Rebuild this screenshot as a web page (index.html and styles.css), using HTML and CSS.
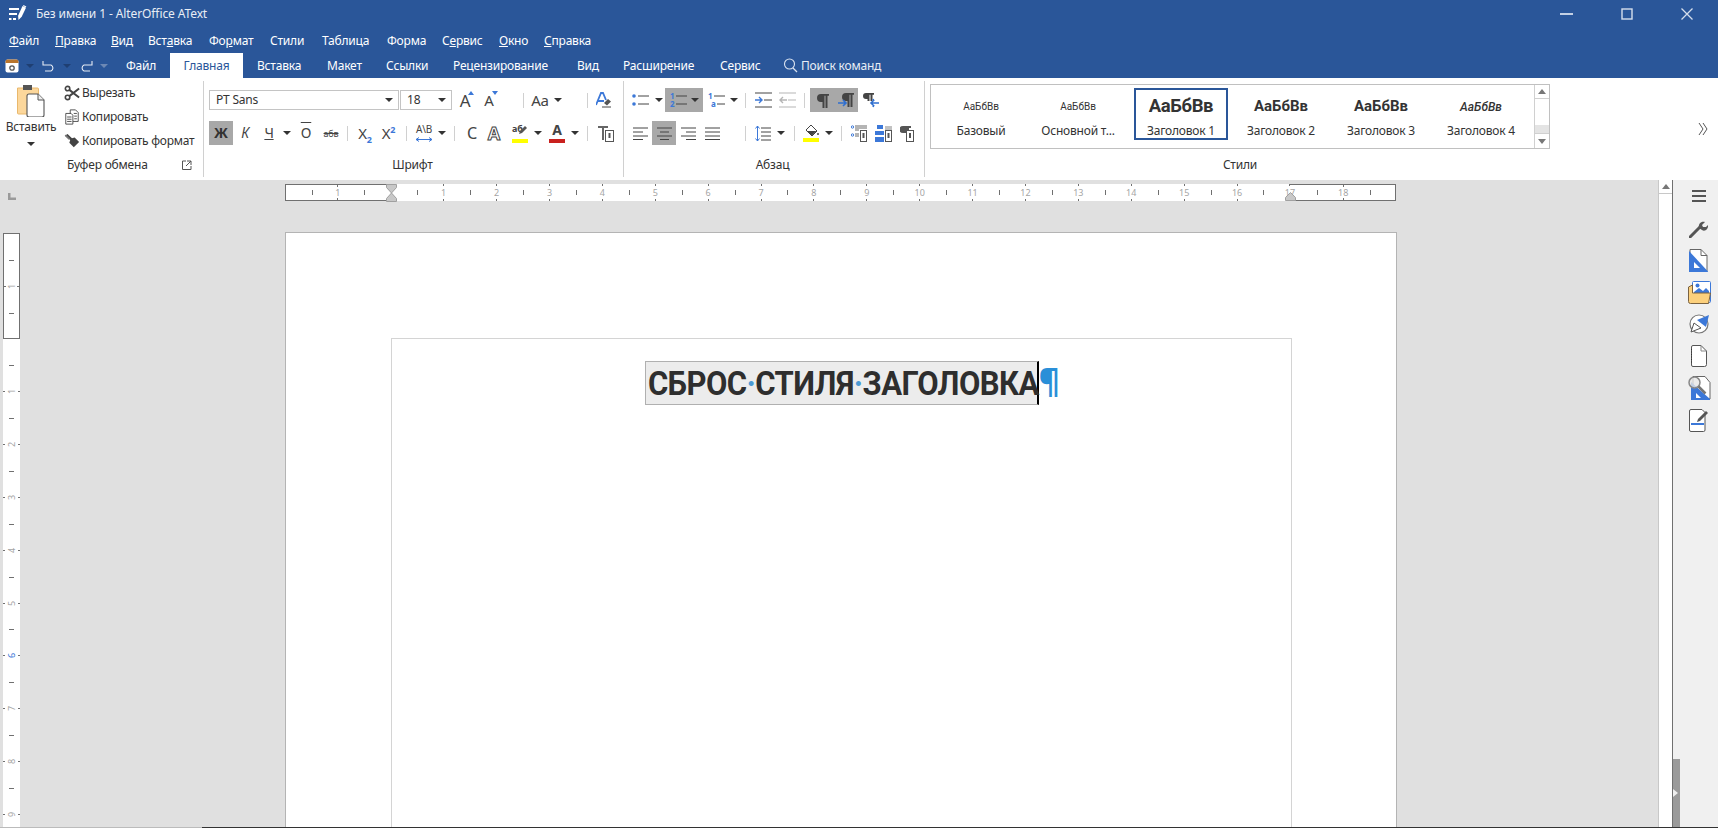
FILE: index.html
```html
<!DOCTYPE html>
<html lang="ru">
<head>
<meta charset="utf-8">
<title>Без имени 1 - AlterOffice AText</title>
<link rel="stylesheet" href="styles.css">
</head>
<body>
<div class="app">
  <header class="titlebar">
    <svg class="logo" width="18" height="18" viewBox="0 0 18 18"><path fill="#fff" d="M0 3h10v2H0zM0 8h8v2H0zM0 13h2.500v2H0zM4 13h3v2H4z"/><path fill="#fff" d="M13.500 1l3.500 1.800-4.300 9L9.500 15l-.4-4.300z"/><path fill="#fff" d="M14.500 0l2.800 1.400-.5 1-2.800-1.400z"/></svg>
    <span class="title">Без имени 1 - AlterOffice AText</span>
    <div class="winctl">
      <span class="wbtn"><svg width="14" height="12" viewBox="0 0 14 12"><path d="M0 6h13" stroke="#c3d0e4" stroke-width="2"/></svg></span>
      <span class="wbtn"><svg width="12" height="12" viewBox="0 0 12 12"><rect x="1" y="1" width="10" height="10" fill="none" stroke="#d5deec" stroke-width="1.400"/></svg></span>
      <span class="wbtn"><svg width="12" height="12" viewBox="0 0 12 12"><path d="M.5.5l11 11M11.500.5l-11 11" stroke="#d5deec" stroke-width="1.300"/></svg></span>
    </div>
  </header>

  <nav class="menubar">
    <a><u>Ф</u>айл</a><a><u>П</u>равка</a><a><u>В</u>ид</a><a>Вст<u>а</u>вка</a><a>Фо<u>р</u>мат</a><a>Стили</a><a>Таблица</a><a>Форма</a><a>С<u>е</u>рвис</a><a><u>О</u>кно</a><a><u>С</u>правка</a>
  </nav>

  <div class="tabbar">
    <div class="qat">
      <svg class="qi" width="14" height="14" viewBox="0 0 14 14"><rect x=".5" y=".5" width="13" height="13" rx="2" fill="#fff"/><path d="M.5 2.500a2 2 0 0 1 2-2h9a2 2 0 0 1 2 2V4H.5z" fill="#b9752c"/><circle cx="7" cy="9" r="2.200" fill="none" stroke="#555" stroke-width="1.300"/></svg>
      <span class="qcaret"></span>
      <svg class="qu" width="14" height="12" viewBox="0 0 14 12"><path d="M1 1v4h4M1 5h8a3.300 3.300 0 0 1 0 6H3" fill="none" stroke="#e6ecf5" stroke-width="1.100"/></svg>
      <span class="qcaret"></span>
      <svg class="qu" width="14" height="12" viewBox="0 0 14 12"><path d="M13 1v4H9M13 5H5a3.300 3.300 0 0 0 0 6h6" fill="none" stroke="#e6ecf5" stroke-width="1.100"/></svg>
      <span class="qcaret dim"></span>
    </div>
    <a class="tab t1">Файл</a>
    <a class="tab active">Главная</a>
    <a class="tab t3">Вставка</a>
    <a class="tab t4">Макет</a>
    <a class="tab t5">Ссылки</a>
    <a class="tab t6">Рецензирование</a>
    <a class="tab t7">Вид</a>
    <a class="tab t8">Расширение</a>
    <a class="tab t9">Сервис</a>
    <span class="search">
      <svg width="15" height="15" viewBox="0 0 15 15"><circle cx="6.500" cy="6" r="5" fill="none" stroke="#dbe3f0" stroke-width="1.100"/><path d="M10 10l4 4" stroke="#dbe3f0" stroke-width="1.200"/></svg>
      Поиск команд
    </span>
  </div>

  <section class="ribbon">
    <div class="group g-clip">
      <div class="clip-top">
        <div class="paste">
          <svg width="30" height="32" viewBox="0 0 30 32"><path d="M1.500 3h20a1 1 0 0 1 1 1v25H2.500a1 1 0 0 1-1-1z" fill="#fcd79b" stroke="#e9b86c"/><rect x="7" y="0" width="9" height="5" fill="#555"/><path d="M13 9h9l6 6v15a2 2 0 0 1-2 2H13a2 2 0 0 1-2-2V11a2 2 0 0 1 2-2z" fill="#fff" stroke="#555" stroke-width="1.100"/><path d="M22 9v6h6" fill="#eee" stroke="#555" stroke-width="1"/></svg>
          <span class="paste-label">Вставить</span>
          <span class="caret"></span>
        </div>
        <div class="clip-list">
          <div class="clip-item"><svg width="18" height="18" viewBox="0 0 18 18"><circle cx="4" cy="4" r="2.500" fill="none" stroke="#444" stroke-width="1.800"/><circle cx="4" cy="14" r="2.500" fill="none" stroke="#444" stroke-width="1.800"/><path d="M6 5.500L17 14M6 12.500L17 4" stroke="#444" stroke-width="2.200"/></svg>Вырезать</div>
          <div class="clip-item"><svg width="18" height="18" viewBox="0 0 18 18"><path d="M7 1h6l3 3v10H7z" fill="#fff" stroke="#444"/><path d="M2 5h6l2 2v10H2z" fill="#fff" stroke="#444"/><path d="M3.500 9h5M3.500 11.500h5M3.500 14h5M11 5h3.500M11.500 8h3M11.500 11h3" stroke="#444"/></svg>Копировать</div>
          <div class="clip-item"><svg width="18" height="18" viewBox="0 0 18 18"><path d="M1 3l3-2 5 5 3-1 5 5-6 6-5-5 1-3z" fill="#444"/><path d="M1.500 2.500L6 7" stroke="#777" stroke-width="2"/></svg>Копировать формат</div>
        </div>
      </div>
      <div class="glabel clip-label"><span>Буфер обмена</span>
        <svg class="launch" width="10" height="10" viewBox="0 0 10 10"><path d="M4 1H.5v8.500H9V6" fill="none" stroke="#555"/><path d="M5 1h4v4M9 1L4 6" fill="none" stroke="#555"/></svg>
      </div>
    </div>

    <div class="group g-font">
      <div class="row">
        <div class="combo c-font"><span>PT Sans</span><span class="caret"></span></div>
        <div class="combo c-size ml1"><span>18</span><span class="caret"></span></div>
        <span class="tb w24 ml1 big">A<svg class="sup" width="6" height="4" viewBox="0 0 6 4"><path d="M3 0l3 4H0z" fill="#3c78d8"/></svg></span>
        <span class="tb w24 med">A<svg class="sup" width="6" height="4" viewBox="0 0 6 4"><path d="M3 4L0 0h6z" fill="#3c78d8"/></svg></span>
        <i class="sep ml22"></i>
        <span class="tb w26 ml3 med2">Aa</span><span class="tb w10"><span class="caret"></span></span>
        <i class="sep ml24"></i>
        <span class="tb w24 ml4"><svg width="16" height="16" viewBox="0 0 16 16"><path d="M0 13L5 1h2l3 7M2 9h6" fill="none" stroke="#3c78d8" stroke-width="1.800"/><path d="M8 11l4-4 3 2.500-4 4z" fill="#555"/><path d="M6 15h9" stroke="#444"/></svg></span>
      </div>
      <div class="row">
        <span class="tb w24 on bold-b">Ж</span>
        <span class="tb w24 it">К</span>
        <span class="tb w24 und">Ч</span>
        <span class="tb w12"><span class="caret"></span></span>
        <span class="tb w26 over">О</span>
        <span class="tb w24 strike">абв</span>
        <i class="sep ml4"></i>
        <span class="tb w24 ml5 sx"><span>X<sub>2</sub></span></span>
        <span class="tb w23 sx"><span>X<sup>2</sup></span></span>
        <i class="sep ml6"></i>
        <span class="tb w24 ml5"><span class="ab">A\B</span><svg class="ab-arrow" width="18" height="5" viewBox="0 0 18 5"><path d="M1 2.500h16M4 .5L1 2.500l3 2M14 .5l3 2-3 2" fill="none" stroke="#3c78d8"/></svg></span>
        <span class="tb w12"><span class="caret"></span></span>
        <i class="sep ml6"></i>
        <span class="tb w24 ml5 caps">С</span>
        <span class="tb w20 outline">A</span>
        <span class="tb w24 ml4"><span class="hl">аб</span><svg class="pen" width="9" height="9" viewBox="0 0 9 9"><path d="M0 9l1-3 5-5 2 2-5 5z" fill="#555"/></svg><i class="bar yellow"></i></span>
        <span class="tb w12"><span class="caret"></span></span>
        <span class="tb w24 ml1 colA">A<i class="bar red"></i></span>
        <span class="tb w12"><span class="caret"></span></span>
        <i class="sep ml6"></i>
        <span class="tb w24 ml6"><svg width="16" height="17" viewBox="0 0 16 17"><path d="M0 1h10v2H6v12H4V3H0z" fill="#666"/><rect x="7.500" y="5.500" width="8" height="11" fill="#fff" stroke="#555"/><rect x="10.500" y="8" width="2" height="5" fill="#555"/></svg></span>
      </div>
      <div class="glabel">Шрифт</div>
    </div>

    <div class="group g-para">
      <div class="row">
        <span class="tb w24"><svg width="17" height="14" viewBox="0 0 17 14"><circle cx="2" cy="3" r="1.800" fill="#3c78d8"/><circle cx="2" cy="11" r="1.800" fill="#3c78d8"/><path d="M6 3h11M6 11h11" stroke="#444"/></svg></span>
        <span class="tb w13"><span class="caret"></span></span>
        <span class="tb w38 on numb"><svg width="17" height="16" viewBox="0 0 17 16"><text x="0" y="7" class="mini">1</text><text x="0" y="15" class="mini">2</text><path d="M6 4h11M6 12h11" stroke="#444"/></svg><span class="caret"></span></span>
        <span class="tb w26"><svg width="17" height="16" viewBox="0 0 17 16"><text x="0" y="7" class="mini">1</text><text x="3" y="15" class="mini">a</text><path d="M6 4h11M9 12h8" stroke="#444"/></svg></span>
        <span class="tb w10"><span class="caret"></span></span>
        <i class="sep ml6"></i>
        <span class="tb w24 ml5"><svg width="17" height="16" viewBox="0 0 17 16"><path d="M0 1h17M9 8h8M0 15h17" stroke="#444"/><path d="M0 8h7M4 5l3 3-3 3" fill="none" stroke="#3c78d8" stroke-width="1.400"/></svg></span>
        <span class="tb w24"><svg width="17" height="16" viewBox="0 0 17 16"><path d="M0 1h17M9 8h8M0 15h17" stroke="#b5b5b5"/><path d="M8 8H1M4 5L1 8l3 3" fill="none" stroke="#b5b5b5" stroke-width="1.400"/></svg></span>
        <i class="sep ml5"></i>
        <div class="pil-on ml5">
          <span class="tb w24"><svg width="13" height="15" viewBox="0 0 13 15"><path d="M5 1h8v1.800h-1.500V15H9.500V2.800h-1V15h-2V9H5a4 4 0 0 1 0-8z" fill="#444"/></svg></span>
          <span class="tb w24"><svg width="16" height="16" viewBox="0 0 16 16"><path d="M8 1h8v1.800h-1.500V15h-2V2.800h-1V15h-2V9H8a4 4 0 0 1 0-8z" fill="#444"/><path d="M0 11h8M5 8l3 3-3 3" fill="none" stroke="#2f6fd0" stroke-width="1.600"/></svg></span>
        </div>
        <span class="tb w24"><svg width="17" height="16" viewBox="0 0 17 16"><path d="M4 1h8v1.800h-1.500V9h-2V2.800h-1V9h-2V7H4a3 3 0 0 1 0-6z" fill="#444"/><path d="M17 11H9M12 8l-3 3 3 3M11 7l1 2M11 15l1-2" fill="none" stroke="#2f6fd0" stroke-width="1.600"/></svg></span>
      </div>
      <div class="row">
        <span class="tb w24"><svg width="15" height="13" viewBox="0 0 15 13"><path d="M0 1h15M0 5h10M0 9h15M0 12.500h10" stroke="#444"/></svg></span>
        <span class="tb w24 on"><svg width="15" height="13" viewBox="0 0 15 13"><path d="M0 1h15M3 5h9M0 9h15M3 12.500h9" stroke="#444"/></svg></span>
        <span class="tb w24"><svg width="15" height="13" viewBox="0 0 15 13"><path d="M0 1h15M5 5h10M0 9h15M5 12.500h10" stroke="#444"/></svg></span>
        <span class="tb w24"><svg width="15" height="13" viewBox="0 0 15 13"><path d="M0 1h15M0 5h15M0 9h15M0 12.500h15" stroke="#444"/></svg></span>
        <i class="sep ml21"></i>
        <span class="tb w24 ml5"><svg width="16" height="17" viewBox="0 0 16 17"><path d="M6 3h10M6 7h10M6 11h10M6 15h10" stroke="#444"/><path d="M2.500 1v15M.5 3.500l2-2.500 2 2.500M.5 13.500l2 2.500 2-2.500" fill="none" stroke="#3c78d8"/></svg></span>
        <span class="tb w12"><span class="caret"></span></span>
        <i class="sep ml7"></i>
        <span class="tb w24 ml4"><svg width="16" height="18" viewBox="0 0 16 18"><path d="M8 1l6 6-5 5-6-6z" fill="#fff" stroke="#444"/><path d="M3.500 7h10L9 11.500z" fill="#444"/><circle cx="15" cy="10" r="1" fill="#444"/><rect y="14" width="16" height="4" fill="#ffff00"/></svg></span>
        <span class="tb w12"><span class="caret"></span></span>
        <i class="sep ml6"></i>
        <span class="tb w24 ml5"><svg width="16" height="17" viewBox="0 0 16 17"><circle cx="1.500" cy="2" r="1.200" fill="none" stroke="#3c78d8"/><circle cx="1.500" cy="10" r="1.200" fill="none" stroke="#3c78d8"/><path d="M4 1h12M4 3h12M4 5h4M4 9h4M4 11h4" stroke="#444" stroke-width=".8"/><rect x="9.500" y="5.500" width="6" height="11" fill="#fff" stroke="#555"/><rect x="11.500" y="8" width="2" height="5" fill="#555"/></svg></span>
        <span class="tb w24"><svg width="17" height="17" viewBox="0 0 17 17"><rect x="2" y="0" width="6" height="4" fill="#3c78d8"/><rect x="0" y="6" width="9" height="4" fill="#3c78d8"/><rect x="0" y="12" width="9" height="5" fill="#3c78d8"/><rect x="10.500" y="5.500" width="6" height="11" fill="#fff" stroke="#555"/><rect x="12.500" y="8" width="2" height="5" fill="#555"/><path d="M10 2h7M10 4h7" stroke="#666" stroke-width=".8"/></svg></span>
        <span class="tb w24"><svg width="14" height="17" viewBox="0 0 14 17"><path d="M3 1h8v2H9v3H7v2H3a3.500 3.500 0 0 1 0-7z" fill="#555"/><rect x="6.500" y="5.500" width="7" height="11" fill="#fff" stroke="#555"/><rect x="9" y="8" width="2" height="5" fill="#555"/></svg></span>
      </div>
      <div class="glabel">Абзац</div>
    </div>

    <div class="group g-styles">
      <div class="gallery">
        <div class="gitem"><span class="pv pv-base">АаБбВв</span><span class="gname">Базовый</span></div>
        <div class="gitem shift"><span class="pv pv-base">АаБбВв</span><span class="gname">Основной т...</span></div>
        <div class="gitem sel"><span class="pv pv-h1">АаБбВв</span><span class="gname">Заголовок 1</span></div>
        <div class="gitem"><span class="pv pv-h2">АаБбВв</span><span class="gname">Заголовок 2</span></div>
        <div class="gitem"><span class="pv pv-h2">АаБбВв</span><span class="gname">Заголовок 3</span></div>
        <div class="gitem"><span class="pv pv-h4">АаБбВв</span><span class="gname">Заголовок 4</span></div>
        <div class="gscroll">
          <span class="gs-btn"><i class="tri up"></i></span>
          <span class="gs-track"></span>
          <span class="gs-thumb"></span>
          <span class="gs-btn end"><i class="tri down"></i></span>
        </div>
      </div>
      <div class="glabel">Стили</div>
      <svg class="more" width="10" height="12" viewBox="0 0 10 12"><path d="M1 0l4 6-4 6M5 0l4 6-4 6" fill="none" stroke="#555"/></svg>
    </div>
  </section>

  <main class="work">
    <div class="canvas">
      <div class="hrow">
        <div class="corner"><svg width="8" height="7" viewBox="0 0 8 7"><path d="M0 0h2.500v4.500H8V7H0z" fill="#9a9a9a"/></svg></div>
        <div class="hruler">
          <div class="hm hm-l"><span class="cm">1</span><span class="cm"></span></div>
          <div class="hi">
            <span class="cm">1</span><span class="cm">2</span><span class="cm">3</span><span class="cm">4</span><span class="cm">5</span><span class="cm">6</span><span class="cm">7</span><span class="cm">8</span><span class="cm">9</span><span class="cm">10</span><span class="cm">11</span><span class="cm">12</span><span class="cm">13</span><span class="cm">14</span><span class="cm">15</span><span class="cm">16</span><span class="cm">17</span>
          </div>
          <div class="hm hm-r"><span class="cm">18</span><span class="cm"></span></div>
          <svg class="marker m-left" width="11" height="18" viewBox="0 0 11 18"><path d="M.5.500h10v3L5.500 9l5 5.500v3H.5v-3L5.500 9 .5 3.500z" fill="#c8c8c8" stroke="#a0a0a0"/></svg>
          <svg class="marker m-right" width="11" height="9" viewBox="0 0 11 9"><path d="M5.500.5l5 5v3H.5v-3z" fill="#c8c8c8" stroke="#a0a0a0"/></svg>
        </div>
      </div>
      <div class="lower">
        <div class="vruler">
          <div class="vm"><span class="vc"></span><span class="vc"><b>1</b></span><span class="vc"></span></div>
          <div class="vi">
            <span class="vc"><b>1</b></span><span class="vc"><b>2</b></span><span class="vc"><b>3</b></span><span class="vc"><b>4</b></span><span class="vc"><b>5</b></span><span class="vc blue"><b>6</b></span><span class="vc"><b>7</b></span><span class="vc"><b>8</b></span><span class="vc"><b>9</b></span>
          </div>
        </div>
        <div class="page">
          <div class="frame">
            <div class="para">
              <div class="sel-text"><span class="txt">СБРОС<span class="dot">·</span>СТИЛЯ<span class="dot">·</span>ЗАГОЛОВКА</span><span class="pilcrow">¶</span></div>
            </div>
          </div>
        </div>
      </div>
    </div>
    <div class="vscroll">
      <span class="vs-btn"><i class="tri up"></i></span>
    </div>
    <aside class="sidebar">
      <span class="si"><svg width="14" height="12" viewBox="0 0 14 12"><path d="M0 1h14M0 6h14M0 11h14" stroke="#555" stroke-width="2"/></svg></span>
      <span class="si"><svg width="20" height="20" viewBox="0 0 20 20"><path d="M1 19l10-10" stroke="#555" stroke-width="3" stroke-linecap="round"/><path d="M10 10c-1-4 2-7 6-6l-3 3 1 2 3 0 2-2c.5 4-3 7-6 5z" fill="#555"/></svg></span>
      <span class="si"><svg width="20" height="23" viewBox="0 0 20 23"><path d="M1 .5h11l6 6V22H1z" fill="#fff" stroke="#666"/><path d="M12 .5v6h6" fill="none" stroke="#666"/><path d="M0 2l19 20.500V23H0z" fill="#3c78d8"/><path d="M5 13l6 6H5z" fill="#fff"/></svg></span>
      <span class="si"><svg width="23" height="23" viewBox="0 0 23 23"><rect x="4.500" y=".5" width="18" height="21" rx="1" fill="#fff" stroke="#3c78d8"/><path d="M6 11l5-4 4 3 3-3 3 3v2H6z" fill="#3c78d8"/><circle cx="9.500" cy="4.500" r="2" fill="#3c78d8"/><path d="M.5 6l4-2v8h18l-2 10.500H2.500a2 2 0 0 1-2-2z" fill="#fcd07c" stroke="#7a6240"/></svg></span>
      <span class="si"><svg width="20" height="20" viewBox="0 0 20 20"><circle cx="10" cy="10" r="9" fill="#fff" stroke="#777" stroke-width="1.200"/><path d="M2 18l3-9 7 5z" fill="#fff" stroke="#555"/><path d="M8 6l12-5-3 12z" fill="#3c78d8"/></svg></span>
      <span class="si"><svg width="16" height="22" viewBox="0 0 16 22"><path d="M2 .5h8l5.500 5.500v13.500a2 2 0 0 1-2 2H2a1.500 1.500 0 0 1-1.500-1.500V2A1.500 1.500 0 0 1 2 .5z" fill="#fff" stroke="#555"/><path d="M10 .5V6h5.500" fill="none" stroke="#888"/><path d="M.5 4v14" stroke="#333" stroke-dasharray="1 1.500"/></svg></span>
      <span class="si"><svg width="23" height="24" viewBox="0 0 23 24"><path d="M5 .5h12l5 6V23H5z" fill="#fff" stroke="#666"/><path d="M3 6l19 17v1H3z" fill="#3c78d8"/><path d="M8 17l5 5H8z" fill="#fff"/><circle cx="6.500" cy="6.500" r="5.500" fill="#e6e6e6" fill-opacity=".8" stroke="#888" stroke-width="1.500"/><path d="M10.500 10.500l7 7" stroke="#777" stroke-width="2.500"/></svg></span>
      <span class="si"><svg width="20" height="23" viewBox="0 0 20 23"><path d="M2 .5h11l3 3v17.500a1.500 1.500 0 0 1-1.500 1.500H2A1.500 1.500 0 0 1 .5 21V2A1.500 1.500 0 0 1 2 .5z" fill="#fff" stroke="#555"/><path d="M2 15h13" stroke="#3c78d8" stroke-width="2"/><path d="M8 13l1-3 8-8 2 2-8 8z" fill="#555"/></svg></span>
      <span class="handle"><i class="tri right"></i></span>
    </aside>
  </main>
  <div class="baseline"><span class="bl-left"></span><span class="bl-right"></span></div>
</div>
</body>
</html>
```

FILE: styles.css
```css
* { box-sizing: border-box; }
html, body { margin: 0; padding: 0; background: #e0e0e0; }
body { font: 12px/1 "Noto Sans", sans-serif; color: #333; letter-spacing: -0.2px; }
.app { width: 1718px; height: 828px; display: flex; flex-direction: column; overflow: hidden; }

/* title bar */
.titlebar { height: 28px; background: #2a5699; display: flex; align-items: center; color: #fff; }
.logo { margin-left: 9px; flex: none; }
.title { margin-left: 9px; color: #e8edf5; letter-spacing: -0.1px; }
.winctl { margin-left: auto; margin-right: 1px; display: flex; }
.wbtn { width: 60px; height: 28px; display: flex; align-items: center; justify-content: center; }

/* menu */
.menubar { height: 25px; background: #2a5699; display: grid; grid-template-columns: 46px 56px 37px 61px 61px 52px 65px 55px 57px 45px auto; align-items: center; justify-content: start; padding-left: 9px; }
.menubar a { color: #fff; }

/* tabs */
.tabbar { height: 25px; background: #2a5699; display: flex; align-items: stretch; color: #fff; }
.qat { width: 117px; display: flex; align-items: center; padding-left: 5px; }
.qcaret { width: 0; height: 0; border: 4px solid transparent; border-top: 4px solid #1f3f72; border-bottom: 0; margin: 0 8px 0 7px; }
.qcaret.dim { border-top-color: #6d89b5; }
.qu { flex: none; }
.tab { display: flex; align-items: center; padding-left: 14px; color: #fff; flex: none; }
.tab.active { background: #fff; color: #2a5699; width: 73px; justify-content: center; padding: 0; }
.tab.t1 { width: 53px; padding-left: 9px; }
.t3 { width: 70px; } .t4 { width: 59px; } .t5 { width: 67px; } .t6 { width: 124px; } .t7 { width: 46px; } .t8 { width: 97px; } .t9 { width: 63px; }
.search { display: flex; align-items: center; gap: 3px; margin-left: 14px; color: #e8edf5; }

/* ribbon */
.ribbon { height: 102px; background: #fff; display: flex; padding-top: 3px; }
.group { height: 96px; display: flex; flex-direction: column; padding-top: 7px; flex: none; border-right: 1px solid #d0d0d0; position: relative; }
.g-clip { width: 204px; padding-top: 0; }
.g-font { width: 420px; padding-left: 5px; }
.g-para { width: 301px; padding-left: 4px; }
.g-styles { flex: 1; border-right: 0; padding: 3px 0 0 5px; }
.row { display: flex; align-items: center; height: 24px; margin-bottom: 9px; }
.glabel { margin-top: auto; height: 23px; padding-bottom: 2px; display: flex; align-items: center; justify-content: center; }
.g-font .glabel, .g-para .glabel { margin-right: 7px; }

.clip-top { display: flex; height: 73px; }
.paste { width: 62px; display: flex; flex-direction: column; align-items: center; padding-top: 4px; }
.paste-label { margin-top: 4px; margin-bottom: 9px; }
.clip-list { display: flex; flex-direction: column; }
.clip-item { height: 24px; display: flex; align-items: center; gap: 2px; margin-left: 2px; white-space: nowrap; letter-spacing: -0.26px; }
.clip-item svg { width: 16px; height: 16px; flex: none; }
.clip-label { justify-content: flex-start; padding-left: 67px; }
.launch { margin-left: 34px; }

.caret { display: inline-block; width: 0; height: 0; border: 4px solid transparent; border-top: 4px solid #333; border-bottom: 0; flex: none; }

.combo { height: 20px; border: 1px solid #c4c4c4; display: flex; align-items: center; justify-content: space-between; padding: 0 5px 0 6px; flex: none; font-size: 12px; }
.c-font { width: 190px; }
.c-size { width: 52px; }

.tb { height: 24px; display: flex; align-items: center; justify-content: center; flex: none; position: relative; font-size: 14px; color: #444; }
.tb.on { background: #a8a8a8; }
.w10 { width: 10px; } .w12 { width: 12px; } .w13 { width: 13px; } .w20 { width: 20px; } .w23 { width: 23px; }
.w24 { width: 24px; } .w26 { width: 26px; } .w38 { width: 38px; }
.numb { gap: 4px; }
.ml1 { margin-left: 1px; } .ml3 { margin-left: 3px; } .ml4 { margin-left: 4px; } .ml5 { margin-left: 5px; }
.ml6 { margin-left: 6px; } .ml7 { margin-left: 7px; } .ml21 { margin-left: 21px; } .ml22 { margin-left: 22px; } .ml24 { margin-left: 24px; }
.sep { width: 1px; height: 15px; background: #d0d0d0; flex: none; }
.pil-on { display: flex; background: #a8a8a8; }

.big { font-size: 17px; }
.med { font-size: 15px; }
.med2 { font-size: 15px; }
.sup { position: absolute; top: 3px; right: 3px; }
.bold-b { font-weight: 700; font-size: 14px; color: #333; }
.it { font-style: italic; }
.und { text-decoration: underline; }
.over { text-decoration: overline; font-size: 14px; }
.strike { text-decoration: line-through; font-size: 9px; }
.sx { font-size: 15px; }
.sx sub, .sx sup { font-size: 9px; color: #3c78d8; font-weight: 700; line-height: 0; }
.ab { font-size: 10px; position: absolute; top: 3px; }
.ab-arrow { position: absolute; bottom: 3px; }
.caps { font-size: 16px; }
.outline { font-size: 18px; color: #fff; -webkit-text-stroke: 1px #444; font-weight: 700; }
.hl { font-size: 9px; position: absolute; top: 3px; left: 4px; font-weight: 700; }
.pen { position: absolute; top: 4px; right: 4px; }
.bar { position: absolute; bottom: 2px; left: 4px; width: 16px; height: 4px; }
.yellow { background: #ffff00; }
.red { background: #c9211e; }
.colA { align-items: flex-start; padding-top: 2px; font-weight: 700; }
.mini { font: 700 8px "Noto Sans", sans-serif; fill: #3c78d8; }

/* style gallery */
.gallery { width: 620px; height: 65px; border: 1px solid #c0c0c0; display: flex; padding-top: 3px; flex: none; }
.gitem { width: 94px; height: 52px; margin: 0 3px; border: 2px solid transparent; display: flex; flex-direction: column; align-items: center; flex: none; white-space: nowrap; }
.gitem.sel { border-color: #2a5699; }
.gitem.shift { padding-right: 6px; }
.pv { height: 32px; display: flex; align-items: center; padding-top: 1px; font-family: Roboto, sans-serif; letter-spacing: 0; }
.gname { margin-top: 3px; font-size: 12px; }
.pv-base { font-size: 10px; }
.pv-h1 { font-size: 18.500px; font-weight: 700; letter-spacing: -0.4px; }
.pv-h2 { font-size: 15px; font-weight: 700; }
.pv-h4 { font-size: 12px; font-weight: 500; font-style: italic; }
.gscroll { margin-left: auto; margin-top: -3px; width: 15px; height: 63px; border-left: 1px solid #d0d0d0; display: flex; flex-direction: column; }
.gs-btn { height: 14px; display: flex; align-items: center; justify-content: center; border-bottom: 1px solid #d0d0d0; flex: none; }
.gs-btn.end { border-bottom: 0; border-top: 1px solid #d0d0d0; height: 15px; }
.gs-track { flex: 1; }
.gs-thumb { height: 8px; background: #e4e4e4; flex: none; }
.tri { display: block; width: 0; height: 0; border: 4px solid transparent; }
.tri.up { border-bottom: 5px solid #777; border-top: 0; }
.tri.down { border-top: 5px solid #777; border-bottom: 0; }
.tri.right { border-left: 5px solid #eee; border-right: 0; }
.g-styles .glabel { width: 620px; }
.more { position: absolute; right: 10px; top: 42px; }

/* workspace */
.work { height: 647px; display: flex; background: #e0e0e0; flex: none; }
.canvas { width: 1658px; flex: none; overflow: hidden; }
.hrow { display: flex; height: 21px; padding-top: 4px; }
.corner { width: 285px; padding: 6px 0 0 8px; flex: none; }
.hruler { display: flex; height: 17px; position: relative; width: 1111px; flex: none; }
.cm { width: 52.900px; height: 100%; flex: none; display: flex; align-items: center; justify-content: center; font-size: 9px; color: #a5a5a5; letter-spacing: 0;
  background:
    linear-gradient(#707070, #707070) 0 50% / 1px 5px no-repeat,
    linear-gradient(#707070, #707070) 50% 0 / 1px 2px no-repeat,
    linear-gradient(#707070, #707070) 50% 100% / 1px 2px no-repeat; }
.hm { background: #fff; border: 1px solid #707070; width: 105.800px; display: flex; overflow: hidden; flex: none; height: 17px; }
.hm-l { border-right: 0; padding-left: 25.500px; }
.hm-r { border-left: 0; padding-left: 26.500px; }
.hi { background: #fff; width: 899.400px; display: flex; padding-left: 26.450px; flex: none; position: relative; z-index: 1; }
.marker { position: absolute; z-index: 2; }
.m-left { left: 101px; top: 0; }
.m-right { left: 1000px; top: 8px; }

.lower { display: flex; height: 626px; }
.vruler { width: 17px; margin: 32px 0 0 3px; flex: none; }
.vc { height: 52.900px; width: 100%; display: flex; align-items: center; justify-content: center; font-size: 9px; color: #a5a5a5; writing-mode: vertical-rl; flex: none;
  background:
    linear-gradient(#707070, #707070) 50% 0 / 5px 1px no-repeat,
    linear-gradient(#707070, #707070) 0 50% / 2px 1px no-repeat,
    linear-gradient(#707070, #707070) 100% 50% / 2px 1px no-repeat; }
.vc b { font-weight: 400; transform: rotate(180deg); }
.vc.blue { color: #3c78d8; }
.vm { height: 106px; border: 1px solid #707070; background: #fff; overflow: hidden; display: flex; flex-direction: column; }
.vm .vc:first-child { height: 26px; background: none; }
.vi { background: #fff; height: 600px; display: flex; flex-direction: column; padding-top: 26px; overflow: hidden; }
.page { width: 1112px; margin: 31px 0 0 265px; background: #fff; border: 1px solid #b4b4b4; border-bottom: 0; padding: 105px 0 0 105px; flex: none; }
.frame { width: 901px; height: 600px; border: 1px solid #d4d4d4; border-bottom: 0; padding-top: 22px; }
.para { display: flex; justify-content: center; }
.sel-text { position: relative; width: 394px; height: 44px; background: #ececec; border: 1px solid #b0b0b0; border-right: 2px solid #000; display: flex; align-items: center; font-family: Roboto, sans-serif; font-size: 33px; font-weight: 700; letter-spacing: -0.6px; color: #2e2e2e; white-space: pre; }
.txt { display: block; padding-left: 2px; transform: scaleX(.94); transform-origin: 0 50%; }
.dot { color: #4a9ad4; }
.pilcrow { position: absolute; left: 100%; top: 2px; margin-left: 2px; color: #2a8fd8; font-family: "Noto Sans", sans-serif; letter-spacing: 0; }

.vscroll { width: 15px; flex: none; background: #fff; border-left: 1px solid #c8c8c8; border-right: 1px solid #707070; }
.vs-btn { height: 14px; display: flex; align-items: center; justify-content: center; border-bottom: 1px solid #c8c8c8; }
.sidebar { flex: 1; background: #f0f0f0; display: flex; flex-direction: column; align-items: center; padding-left: 7px; position: relative; }
.si { height: 32px; display: flex; align-items: center; justify-content: center; flex: none; }
.handle { position: absolute; left: 0; bottom: 0; width: 7px; height: 68px; background: #9a9a9a; display: flex; align-items: center; }
.baseline { height: 1px; display: flex; flex: none; }
.bl-left { width: 202px; background: #bbb; }
.bl-right { flex: 1; background: #333; }
```
